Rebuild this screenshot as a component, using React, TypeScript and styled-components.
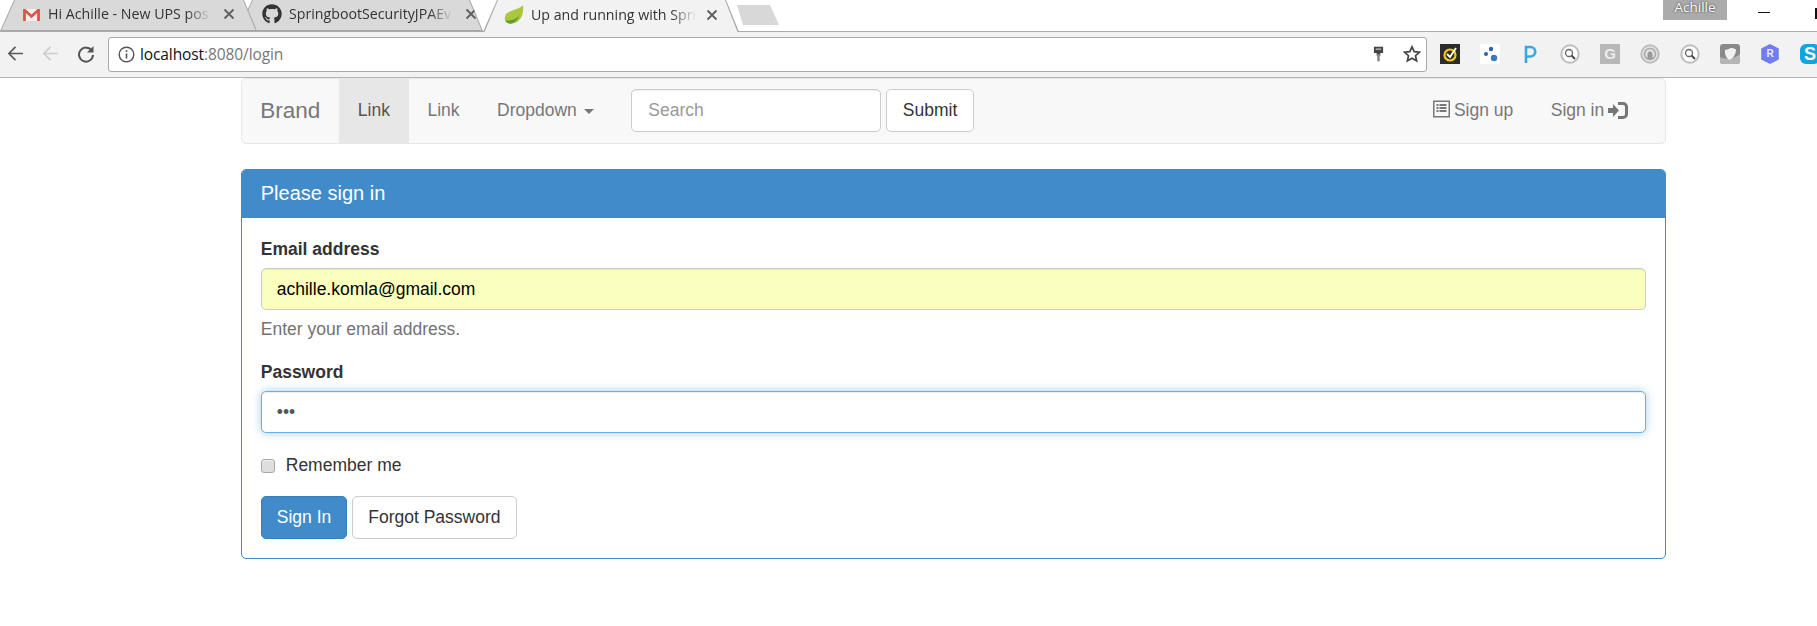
import React from "react";
import styled, { createGlobalStyle } from "styled-components";
import { FaGithub } from "react-icons/fa";

const Global = createGlobalStyle`
  html, body { margin: 0; padding: 0; background: #fff; overflow: hidden; }
  * { box-sizing: border-box; }
  body { font-family: "Liberation Sans", Arial, sans-serif; font-size: 17.5px; line-height: 25px; color: #333; }
`;

/* ---------- browser chrome ---------- */
const TabStrip = styled.div`
  position: relative;
  display: flex;
  height: 32px;
  background: #fff;
  border-bottom: 1px solid #ababab;
`;
const Tab = styled.div<{ $active?: boolean; $width: number; $offset: number; $z: number; $inset: number }>`
  position: relative;
  z-index: ${(p) => p.$z};
  flex: none;
  display: flex;
  align-items: center;
  height: ${(p) => (p.$active ? 32 : 31)}px;
  width: ${(p) => p.$width}px;
  margin-left: ${(p) => p.$offset}px;
  padding: 0 0 3px ${(p) => p.$inset}px;
  background: #a6a6a6;
  clip-path: polygon(0 100%, 14px 0, calc(100% - 13px) 0, 100% 100%);
  &::before {
    content: "";
    position: absolute;
    inset: 0 0 ${(p) => (p.$active ? 0 : 1)}px 0;
    background: ${(p) => (p.$active ? "#f2f2f2" : "#d9d9d9")};
    clip-path: polygon(1.5px 100%, 15px 0, calc(100% - 14px) 0, calc(100% - 1.5px) 100%);
  }
`;
const TabIcon = styled.span`
  position: relative;
  flex: none;
  width: 20px;
  height: 20px;
  margin-right: 7px;
  display: flex;
  align-items: center;
  justify-content: center;
  color: #333;
`;
const TabTitle = styled.span<{ $width: number }>`
  position: relative;
  flex: none;
  width: ${(p) => p.$width}px;
  overflow: hidden;
  white-space: nowrap;
  font-family: "Open Sans", sans-serif;
  font-size: 14.2px;
  line-height: 20px;
  color: #333;
  mask-image: linear-gradient(to right, #000 85%, transparent 100%);
`;
const TabClose = styled.span<{ $gap: number }>`
  position: relative;
  flex: none;
  margin-left: ${(p) => p.$gap}px;
  display: flex;
  color: #5f5f5f;
`;
const NewTab = styled.div`
  flex: none;
  width: 42px;
  height: 20px;
  margin: 5px 0 0 -2px;
  background: #d8d8d8;
  clip-path: polygon(0 0, 33px 0, 100% 100%, 6px 100%);
`;
const Profile = styled.div`
  position: absolute;
  top: 0;
  left: 1663px;
  width: 64px;
  height: 20px;
  background: #ababab;
  color: #fff;
  font-family: "Open Sans", sans-serif;
  font-size: 13.5px;
  line-height: 15px;
  text-align: center;
  text-shadow: 0 0 2px #222;
`;
const Minimize = styled.div`
  position: absolute;
  top: 12px;
  left: 1758px;
  width: 12px;
  height: 1px;
  background: #111;
`;
const Maximize = styled.div`
  position: absolute;
  top: 8px;
  left: 1815px;
  width: 2px;
  height: 11px;
  background: #111;
`;
const Toolbar = styled.div`
  display: flex;
  align-items: center;
  height: 46px;
  padding: 0 0 1px 0;
  background: #f2f2f2;
  border-bottom: 1px solid #b5b5b5;
`;
const NavIcon = styled.span`
  flex: none;
  width: 35px;
  display: flex;
  justify-content: center;
`;
const NavCluster = styled.div`
  flex: none;
  width: 110px;
  margin-left: -2px;
  display: flex;
`;
const Omnibox = styled.div`
  flex: none;
  width: 1319px;
  height: 35px;
  display: flex;
  align-items: center;
  padding: 0 5px 0 9px;
  background: #fff;
  border: 1px solid #a9a9a9;
  border-radius: 3px;
`;
const Url = styled.div`
  flex: 1;
  margin-left: 5px;
  font-family: "Open Sans", sans-serif;
  font-size: 15.5px;
  line-height: 20px;
  color: #111;
  letter-spacing: -0.1px;
  span { color: #777; }
`;
const OmniIcon = styled.span<{ $gap: number }>`
  flex: none;
  display: flex;
  margin-left: ${(p) => p.$gap}px;
`;
const Extensions = styled.div`
  flex: none;
  display: flex;
  gap: 20px;
  margin-left: 13px;
  align-items: center;
  white-space: nowrap;
`;
const Ext = styled.span`
  flex: none;
  width: 20px;
  height: 20px;
  display: flex;
`;
const GBadge = styled.span`
  flex: none;
  width: 20px;
  height: 20px;
  background: #b8b8b8;
  color: #ececec;
  font-size: 15px;
  font-weight: 700;
  line-height: 20px;
  text-align: center;
`;
const HexBadge = styled.span`
  flex: none;
  width: 20px;
  height: 20px;
  background: #6f7df0;
  color: #eef;
  font-size: 10px;
  font-weight: 700;
  line-height: 20px;
  text-align: center;
  clip-path: polygon(50% 0, 94% 22%, 94% 78%, 50% 100%, 6% 78%, 6% 22%);
`;
const SkypeBadge = styled.span`
  flex: none;
  width: 20px;
  height: 20px;
  border-radius: 6px;
  background: #10a5e0;
  color: #fff;
  font-size: 18px;
  font-weight: 700;
  line-height: 20px;
  text-align: center;
`;

/* ---------- page ---------- */
const Page = styled.main`
  width: 1425px;
  margin-left: 241px;
`;
const Navbar = styled.nav`
  display: flex;
  align-items: stretch;
  height: 66px;
  padding-right: 18px;
  margin-bottom: 25px;
  background: #f8f8f8;
  border: 1px solid #e7e7e7;
  border-radius: 5px;
`;
const Brand = styled.a`
  padding: 18.75px 18.75px 18.75px 18.25px;
  font-size: 22.5px;
  line-height: 25px;
  color: #777;
`;
const NavLink = styled.a<{ $active?: boolean }>`
  display: flex;
  align-items: flex-start;
  padding: 18.75px 18.75px;
  height: 64px;
  color: ${(p) => (p.$active ? "#555" : "#777")};
  background: ${(p) => (p.$active ? "#e7e7e7" : "transparent")};
  white-space: nowrap;
`;
const Caret = styled.span`
  align-self: center;
  margin: 0 0 0 7px;
  width: 0;
  height: 0;
  border-top: 5px solid #777;
  border-left: 5px solid transparent;
  border-right: 5px solid transparent;
`;
const SearchForm = styled.form`
  display: flex;
  gap: 5px;
  padding: 10px 18.75px;
  margin: 0;
`;
const Input = styled.input<{ $autofill?: boolean; $focus?: boolean }>`
  display: block;
  height: 42px;
  padding: 7.5px 15px;
  font: inherit;
  font-family: inherit;
  color: ${(p) => (p.$autofill ? "#000" : "#555")};
  background: ${(p) => (p.$autofill ? "#faffbd" : "#fff")};
  border: 1px solid ${(p) => (p.$focus ? "#66afe9" : "#ccc")};
  border-radius: 5px;
  outline: none;
  box-shadow: ${(p) =>
    p.$focus
      ? "inset 0 1px 1px rgba(0,0,0,.075), 0 0 10px rgba(102,175,233,.6)"
      : "inset 0 1px 1px rgba(0,0,0,.075)"};
  &::placeholder { color: #999; opacity: 1; }
`;
const SearchInput = styled(Input)`
  width: 250px;
  height: 43px;
  padding-left: 16px;
`;
const FieldInput = styled(Input)`
  width: 100%;
`;
const Button = styled.button<{ $primary?: boolean }>`
  flex: none;
  height: 43px;
  padding: 0 15px;
  font: inherit;
  color: ${(p) => (p.$primary ? "#fff" : "#333")};
  background: ${(p) => (p.$primary ? "#428bca" : "#fff")};
  border: 1px solid ${(p) => (p.$primary ? "#357ebd" : "#ccc")};
  border-radius: 5px;
`;
const SubmitButton = styled(Button)`
  padding: 0 15.5px;
`;
const NavRight = styled.div`
  margin-left: auto;
  display: flex;
`;
const NavGlyph = styled.svg<{ $left?: boolean }>`
  align-self: center;
  flex: none;
  margin: ${(p) => (p.$left ? "-5px 4px 0 0" : "-2px 0 0 4px")};
`;
const Panel = styled.section`
  border: 1px solid #428bca;
  border-radius: 5px;
  overflow: hidden;
`;
const PanelHeading = styled.header`
  height: 48px;
  padding: 11px 18.75px 0;
  background: #428bca;
  color: #fff;
  font-size: 20px;
  line-height: 25px;
`;
const PanelBody = styled.form`
  padding: 18.75px 18.75px;
  margin: 0;
`;
const Field = styled.div<{ $tight?: boolean }>`
  margin-bottom: ${(p) => (p.$tight ? 17.75 : 19.75)}px;
`;
const Label = styled.label`
  display: block;
  margin-bottom: 6.25px;
  font-weight: 700;
`;
const Help = styled.p`
  margin: 7.25px 0 0;
  color: #737373;
`;
const CheckRow = styled.label`
  display: flex;
  align-items: center;
  margin-bottom: 17.75px;
`;
const Checkbox = styled.input`
  appearance: none;
  width: 14px;
  height: 14px;
  margin: 0 11px 0 0;
  background: #dedede;
  border: 1px solid #a8a8a8;
  border-radius: 3px;
  box-shadow: inset 0 1px 1px #f2f2f2;
`;
const Actions = styled.div`
  display: flex;
  gap: 5px;
`;

const Close = () => (
  <svg width="12" height="12" viewBox="0 0 12 12" stroke="currentColor" strokeWidth="1.8">
    <path d="M1.5 1.5l9 9M10.5 1.5l-9 9" />
  </svg>
);

const Gmail = () => (
  <svg width="19" height="15" viewBox="0 0 20 16">
    <path d="M1 2h18v13H1z" fill="#f1efec" />
    <path d="M1 15V2h2.5L10 8l6.500-6H19v13h-3V6.500L10 12 4 6.500V15z" fill="#d9574a" />
  </svg>
);

const Leaf = () => (
  <svg width="21" height="20" viewBox="0 0 21 20">
    <path d="M20 0C21 9 18 18 8 19 3 19.500 0 17 1 12 2 5 12 6 20 0z" fill="#a9c93a" />
    <path d="M1.500 16c5 0 11-1 15-6-2 5-5 8-8.500 9-3 .4-5-1-6.500-3z" fill="#5f9a3a" />
  </svg>
);

const Back = ({ color }: { color: string }) => (
  <svg width="17" height="17" viewBox="0 0 18 18" fill="none" stroke={color} strokeWidth="1.8">
    <path d="M17 9H2M9 2L2 9l7 7" />
  </svg>
);

const Reload = () => (
  <svg width="18" height="18" viewBox="0 0 18 18" fill="none">
    <path d="M15 6A7 7 0 1 0 16 10" stroke="#555" strokeWidth="2" />
    <path d="M16.500 1v6.500H10z" fill="#555" />
  </svg>
);

const Info = () => (
  <svg width="17" height="17" viewBox="0 0 17 17" fill="none">
    <circle cx="8.5" cy="8.5" r="7.3" stroke="#555" strokeWidth="1.4" />
    <path d="M8.5 7.5v5" stroke="#555" strokeWidth="1.6" />
    <path d="M8.5 4.2v1.8" stroke="#555" strokeWidth="1.6" />
  </svg>
);

const Key = () => (
  <svg width="11" height="18" viewBox="0 0 12 18">
    <path d="M1 1h10v7H8v3H4V8H1z" fill="#444" />
    <path d="M4.600 9h2.800v8H4.600z" fill="#888" />
    <path d="M3 3h6v1.500H3z" fill="#bbb" />
  </svg>
);

const Star = () => (
  <svg width="18" height="18" viewBox="0 0 18 18" fill="none" stroke="#444" strokeWidth="1.7">
    <path d="M9 1.800l2.200 4.800 5.200.6-3.900 3.500 1.100 5.100L9 13.200l-4.600 2.600 1.100-5.100L1.600 7.200l5.200-.6z" />
  </svg>
);

const Norton = () => (
  <svg width="20" height="20" viewBox="0 0 20 20">
    <path d="M0 0h20v20H0z" fill="#2b2b2b" />
    <circle cx="10" cy="11" r="5.500" fill="none" stroke="#f5c518" strokeWidth="2.200" />
    <path d="M7 10l3 3 6-9" fill="none" stroke="#fff" strokeWidth="1.800" />
  </svg>
);

const Dots = () => (
  <svg width="20" height="20" viewBox="0 0 20 20">
    <path d="M0 0h20v20H0z" fill="#fff" />
    <circle cx="11" cy="5" r="2.200" fill="#2d62a8" />
    <circle cx="6" cy="10" r="2" fill="#2d62a8" />
    <circle cx="14" cy="14" r="3.200" fill="#3b78c4" />
  </svg>
);

const PMark = () => (
  <svg width="20" height="20" viewBox="0 0 20 20" fill="none" stroke="#3aa7e0" strokeWidth="2.600">
    <path d="M6 19V3h4.500a4.500 4.500 0 0 1 0 9.500H6" />
  </svg>
);

const Lens = () => (
  <svg width="20" height="20" viewBox="0 0 20 20" fill="none">
    <circle cx="10" cy="10" r="8.700" fill="#fff" stroke="#bdbdbd" strokeWidth="2" />
    <circle cx="9" cy="9" r="3.500" stroke="#666" strokeWidth="1.300" />
    <path d="M11.500 11.500L15 15" stroke="#444" strokeWidth="1.800" />
  </svg>
);

const Ghost = () => (
  <svg width="20" height="20" viewBox="0 0 20 20" fill="none">
    <circle cx="10" cy="10" r="8.700" fill="#e2e2e2" stroke="#bdbdbd" strokeWidth="2" />
    <circle cx="10" cy="10" r="5.500" stroke="#aaa" strokeWidth="1.500" />
    <path d="M7.500 15v-5a2.500 2.500 0 0 1 5 0v5z" fill="#999" />
  </svg>
);

const Shield = () => (
  <svg width="20" height="20" viewBox="0 0 20 20">
    <rect width="20" height="20" rx="3" fill="#8a8a8a" />
    <path d="M0 13c7 3 14 2 20-3v7a3 3 0 0 1-3 3H3a3 3 0 0 1-3-3z" fill="#b5b5b5" />
    <path d="M11 4c2 0 4 .6 5 1.500 0 5-3 9-6.500 10.500C6 14 4.500 10 5 6c2-.3 4-1.200 6-2z" fill="#f1f1f1" />
  </svg>
);

const ListAlt = () => (
  <NavGlyph $left width="17" height="18" viewBox="0 0 17 17">
    <path d="M0 0h17v17H0zM1.500 1.500v14h14v-14z" fill="#777" fillRule="evenodd" />
    <path d="M3.500 3.500h2v2h-2zM6.500 3.500h7v2h-7zM3.500 6.500h2v2h-2zM6.500 6.500h7v2h-7zM3.500 9.500h2v2h-2zM6.500 9.500h7v2h-7z" fill="#777" />
  </NavGlyph>
);

const LogIn = () => (
  <NavGlyph width="20" height="17" viewBox="0 0 20 17">
    <path d="M0 6h5V2l6 6.500-6 6.500v-4H0z" fill="#777" />
    <path d="M10 0h5a5 5 0 0 1 5 5v7a5 5 0 0 1-5 5h-5v-3h5a2 2 0 0 0 2-2V5a2 2 0 0 0-2-2h-5z" fill="#777" />
  </NavGlyph>
);

export default function App() {
  return (
    <>
      <Global />
      <TabStrip>
        <Tab $width={257} $offset={0} $z={2} $inset={21}>
          <TabIcon><Gmail /></TabIcon>
          <TabTitle $width={163}>Hi Achille - New UPS pos</TabTitle>
          <TabClose $gap={12}><Close /></TabClose>
        </Tab>
        <Tab $width={245} $offset={-19} $z={1} $inset={24}>
          <TabIcon><FaGithub size={20} /></TabIcon>
          <TabTitle $width={164}>SpringbootSecurityJPAEv</TabTitle>
          <TabClose $gap={12}><Close /></TabClose>
        </Tab>
        <Tab $active $width={256} $offset={0} $z={3} $inset={21}>
          <TabIcon><Leaf /></TabIcon>
          <TabTitle $width={165}>Up and running with Spri</TabTitle>
          <TabClose $gap={10}><Close /></TabClose>
        </Tab>
        <NewTab />
        <Profile>Achille</Profile>
        <Minimize />
        <Maximize />
      </TabStrip>
      <Toolbar>
        <NavCluster>
          <NavIcon><Back color="#5a5a5a" /></NavIcon>
          <NavIcon><Back color="#cdcdcd" /></NavIcon>
          <NavIcon><Reload /></NavIcon>
        </NavCluster>
        <Omnibox>
          <Info />
          <Url>localhost<span>:8080/login</span></Url>
          <OmniIcon $gap={0}><Key /></OmniIcon>
          <OmniIcon $gap={19}><Star /></OmniIcon>
        </Omnibox>
        <Extensions>
          <Ext><Norton /></Ext>
          <Ext><Dots /></Ext>
          <Ext><PMark /></Ext>
          <Ext><Lens /></Ext>
          <GBadge>G</GBadge>
          <Ext><Ghost /></Ext>
          <Ext><Lens /></Ext>
          <Ext><Shield /></Ext>
          <HexBadge>R</HexBadge>
          <SkypeBadge>S</SkypeBadge>
        </Extensions>
      </Toolbar>
      <Page>
        <Navbar>
          <Brand>Brand</Brand>
          <NavLink $active>Link</NavLink>
          <NavLink>Link</NavLink>
          <NavLink>Dropdown<Caret /></NavLink>
          <SearchForm>
            <SearchInput placeholder="Search" readOnly />
            <SubmitButton type="button">Submit</SubmitButton>
          </SearchForm>
          <NavRight>
            <NavLink><ListAlt />Sign up</NavLink>
            <NavLink>Sign in<LogIn /></NavLink>
          </NavRight>
        </Navbar>
        <Panel>
          <PanelHeading>Please sign in</PanelHeading>
          <PanelBody>
            <Field $tight>
              <Label>Email address</Label>
              <FieldInput $autofill type="email" value="achille.komla@gmail.com" readOnly />
              <Help>Enter your email address.</Help>
            </Field>
            <Field>
              <Label>Password</Label>
              <FieldInput $focus type="password" value="abc" readOnly />
            </Field>
            <CheckRow><Checkbox type="checkbox" />Remember me</CheckRow>
            <Actions>
              <Button $primary type="button">Sign In</Button>
              <Button type="button">Forgot Password</Button>
            </Actions>
          </PanelBody>
        </Panel>
      </Page>
    </>
  );
}
